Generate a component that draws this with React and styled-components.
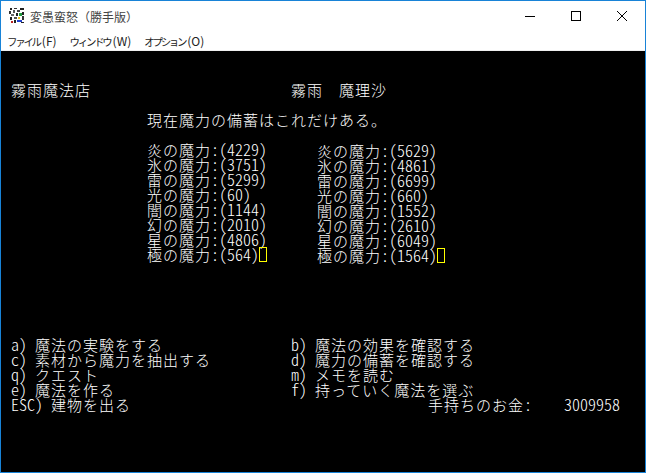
import React from "react";
import styled, { createGlobalStyle } from "styled-components";

const Global = createGlobalStyle`
    html, body { margin: 0; padding: 0; background: #fff; }
`

const magicLeft = ["炎の魔力:(4229)", "氷の魔力:(3751)", "雷の魔力:(5299)", "光の魔力:(60)", "闇の魔力:(1144)", "幻の魔力:(2010)", "星の魔力:(4806)", "極の魔力:(564)"];
const magicRight = ["炎の魔力:(5629)", "氷の魔力:(4861)", "雷の魔力:(6699)", "光の魔力:(660)", "闇の魔力:(1552)", "幻の魔力:(2610)", "星の魔力:(6049)", "極の魔力:(1564)"];

// half width and full width runs have their own font, as in a console
const Text = ({ children }) => {
    const runs = children.match(/[\x20-\x7e]+|[^\x20-\x7e]+/g);
    return runs.map((run, i) =>
        /^[\x20-\x7e]/.test(run) ? <Half key={i}>{run}</Half> : <Full key={i}>{run}</Full>
    );
}

const Column = ({ lines }) => (
    <div>
        {lines.map((line, i) => (
            <Line key={i}>
                <Text>{line}</Text>
                {i === lines.length - 1 && <Cursor />}
            </Line>
        ))}
    </div>
)

const MenuEntry = ({ label, hotkey }) => (
    <MenuItem>
        <Kana>{label}</Kana>({hotkey})
    </MenuItem>
)

const App = () => {
    return (
        <Win>
            <Global />
            <TitleBar>
                <AppIcon viewBox="0 0 16 16" shapeRendering="crispEdges">
                    <rect x="1" y="0" width="2" height="2" fill="#222" />
                    <rect x="5" y="0" width="3" height="1" fill="#333" />
                    <rect x="11" y="0" width="4" height="2" fill="#222" />
                    <rect x="0" y="3" width="2" height="3" fill="#333" />
                    <rect x="4" y="2" width="2" height="3" fill="#555" />
                    <rect x="8" y="2" width="3" height="2" fill="#444" />
                    <rect x="13" y="4" width="2" height="3" fill="#222" />
                    <rect x="2" y="6" width="3" height="2" fill="#666" />
                    <rect x="7" y="5" width="2" height="3" fill="#222" />
                    <rect x="10" y="5" width="3" height="3" fill="#1f9a3c" />
                    <rect x="1" y="9" width="2" height="3" fill="#222" />
                    <rect x="5" y="9" width="3" height="2" fill="#555" />
                    <rect x="9" y="9" width="2" height="2" fill="#e8c020" />
                    <rect x="13" y="8" width="2" height="4" fill="#333" />
                    <rect x="2" y="13" width="2" height="2" fill="#c02020" />
                    <rect x="5" y="12" width="2" height="3" fill="#222" />
                    <rect x="8" y="12" width="5" height="2" fill="#2040d0" />
                    <rect x="12" y="14" width="3" height="1" fill="#222" />
                </AppIcon>
                <Title>変愚蛮怒（勝手版）</Title>
                <Controls>
                    <Control>
                        <svg width="10" height="10" viewBox="0 0 10 10"><path d="M0 5.5H10" stroke="#000" /></svg>
                    </Control>
                    <Control>
                        <svg width="10" height="10" viewBox="0 0 10 10"><rect x=".5" y=".5" width="9" height="9" fill="none" stroke="#000" /></svg>
                    </Control>
                    <Control>
                        <svg width="10" height="10" viewBox="0 0 10 10"><path d="M0 0L10 10M10 0L0 10" stroke="#000" /></svg>
                    </Control>
                </Controls>
            </TitleBar>
            <MenuBar>
                <MenuEntry label="ファイル" hotkey="F" />
                <MenuEntry label="ウィンドウ" hotkey="W" />
                <MenuEntry label="オプション" hotkey="O" />
            </MenuBar>
            <Screen>
                <Pair>
                    <Line><Text>霧雨魔法店</Text></Line>
                    <Line><Text>霧雨　魔理沙</Text></Line>
                </Pair>
                <Message><Line><Text>現在魔力の備蓄はこれだけある。</Text></Line></Message>
                <MagicTable>
                    <Column lines={magicLeft} />
                    <RightColumn><Column lines={magicRight} /></RightColumn>
                </MagicTable>
                <Commands>
                    <Line><Text>a) 魔法の実験をする</Text></Line>
                    <Line><Text>b) 魔法の効果を確認する</Text></Line>
                    <Line><Text>c) 素材から魔力を抽出する</Text></Line>
                    <Line><Text>d) 魔力の備蓄を確認する</Text></Line>
                    <Line><Text>q) クエスト</Text></Line>
                    <Line><Text>m) メモを読む</Text></Line>
                    <Line><Text>e) 魔法を作る</Text></Line>
                    <Line><Text>f) 持っていく魔法を選ぶ</Text></Line>
                    <Line><Text>ESC) 建物を出る</Text></Line>
                    <Money><Text>手持ちのお金:    3009958</Text></Money>
                </Commands>
            </Screen>
        </Win>
    )
}

const Win = styled.div`
    width: 646px;
    height: 473px;
    box-sizing: border-box;
    border: 1px solid #1883d7;
    display: flex;
    flex-direction: column;
    overflow: hidden;
    background: #fff;
`

const TitleBar = styled.div`
    height: 30px;
    display: flex;
    align-items: center;
    padding-left: 8px;
    background: #fff;
`

const AppIcon = styled.svg`
    width: 16px;
    height: 16px;
    margin-right: 5px;
`

const Title = styled.div`
    flex: 1;
    font-family: "Noto Sans CJK JP", sans-serif;
    font-size: 12px;
    color: #444;
`

const Controls = styled.div`
    display: flex;
    align-self: stretch;
`

const Control = styled.div`
    width: 46px;
    display: flex;
    align-items: center;
    justify-content: center;
`

const MenuBar = styled.div`
    height: 19px;
    display: flex;
    gap: 13px;
    padding-left: 6px;
    align-items: center;
    background: #fff;
    border-bottom: 1px solid #f0f0f0;
`

const MenuItem = styled.div`
    font-family: "Noto Sans CJK JP", sans-serif;
    font-size: 12px;
    color: #222;
    white-space: nowrap;
`

const Kana = styled.span`
    font-size: 10.5px;
    letter-spacing: -2.3px;
    margin-right: 2px;
`

const Screen = styled.div`
    flex: 1;
    background: #000;
    padding: 31px 0 0 10px;
    color: #fff;
`

const Line = styled.div`
    height: 15px;
    line-height: 15px;
    white-space: pre;
    display: flex;
    align-items: baseline;
`

const Half = styled.span`
    font-family: "Noto Sans CJK JP", sans-serif;
    font-size: 16px;
    font-weight: 300;
    font-feature-settings: "hwid";
`

const Full = styled.span`
    font-family: "Noto Sans CJK JP", sans-serif;
    font-size: 15px;
    font-weight: 300;
    letter-spacing: 1px;
`

const Cursor = styled.span`
    width: 8px;
    height: 15px;
    box-sizing: border-box;
    border: 1px solid #ffff00;
    align-self: center;
`

const Pair = styled.div`
    display: grid;
    grid-template-columns: 280px 1fr;
`

const Message = styled.div`
    margin: 15px 0 15px 136px;
`

const MagicTable = styled.div`
    display: grid;
    grid-template-columns: 170px 1fr;
    padding-left: 136px;
`

const RightColumn = styled.div`
    padding-top: 1px;
`

const Commands = styled.div`
    display: grid;
    grid-template-columns: 280px 1fr;
    margin-top: 74px;
`

const Money = styled(Line)`
    padding-left: 137px;
`

export default App;
